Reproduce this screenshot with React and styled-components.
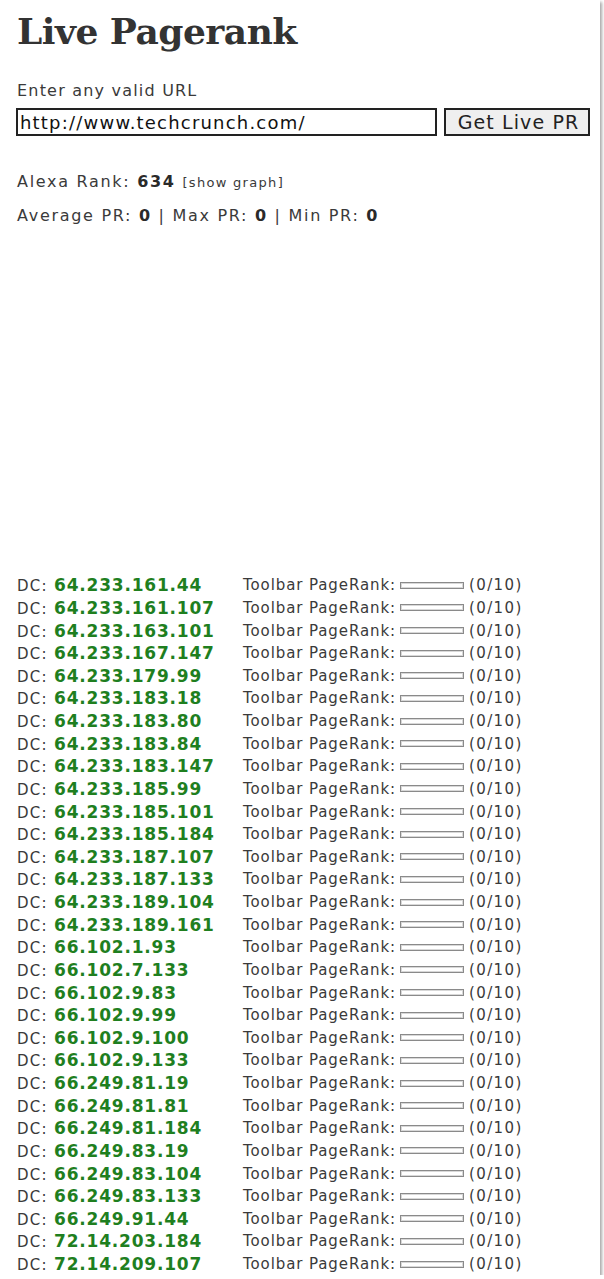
import React from 'react'
import styled, { createGlobalStyle } from 'styled-components'

const GlobalStyle = createGlobalStyle`
    body {
        margin: 0;
        background: #ffffff;
        font-family: "DejaVu Sans", Verdana, sans-serif;
        color: #3a3a3a;
    }
`

const Card = styled.div`
    width: 600px;
    height: 1275px;
    box-sizing: border-box;
    padding: 0 0 0 17px;
    background: #fff;
    box-shadow: 2px 2px 3px rgba(0, 0, 0, 0.35);
    overflow: hidden;
`

const Title = styled.h1`
    font-family: "DejaVu Serif", Georgia, serif;
    font-weight: bold;
    font-size: 36px;
    letter-spacing: -0.5px;
    color: #333;
    margin: 0;
    padding-top: 7px;
    line-height: 48px;
`

const Label = styled.div`
    font-size: 16px;
    letter-spacing: 1.2px;
    margin-top: 26px;
    line-height: 20px;
`

const Form = styled.form`
    display: flex;
    gap: 7px;
    margin: 7px 0 0 -1px;
`

const UrlInput = styled.input`
    width: 421px;
    height: 28px;
    box-sizing: border-box;
    border: 2px solid #222;
    padding: 0 2px;
    font-family: "DejaVu Sans", Verdana, sans-serif;
    font-size: 18px;
    letter-spacing: 1.2px;
    color: #111;
    outline: none;
`

const Button = styled.button`
    width: 146px;
    height: 28px;
    box-sizing: border-box;
    border: 2px solid #222;
    background: #efefef;
    font-family: "DejaVu Sans", Verdana, sans-serif;
    font-size: 19px;
    letter-spacing: 1.1px;
    color: #222;
    padding: 0 0 0 3px;
`

const StatLine = styled.div`
    font-size: 16px;
    letter-spacing: 1.7px;
    line-height: 20px;
    margin-top: ${p => p.$top}px;
`

const Strong = styled.b`
    color: #2a2a2a;
`

const Small = styled.span`
    font-size: 13px;
    letter-spacing: 1.3px;
`

const GraphArea = styled.div`
    height: 348px;
`

const List = styled.div`
    display: flex;
    flex-direction: column;
`

const Row = styled.div`
    display: grid;
    grid-template-columns: 226px auto;
    align-items: center;
    height: 22.63px;
`

const Dc = styled.div`
    font-size: 15px;
    letter-spacing: 1.3px;
    white-space: nowrap;
`

const Ip = styled.span`
    font-size: 17px;
    font-weight: bold;
    color: #1f7f1f;
    letter-spacing: 0.8px;
`

const Toolbar = styled.div`
    display: flex;
    align-items: center;
    font-size: 15px;
    letter-spacing: 0.9px;
    white-space: nowrap;
`

const Bar = styled.span`
    display: inline-block;
    width: 64px;
    height: 7px;
    box-sizing: border-box;
    border: 1px solid #8a8a8a;
    box-shadow: inset 0 0 0 1px #d8d8d8;
    margin: 0 5px 0 4px;
`

const Score = styled.span`
    letter-spacing: 1.4px;
`

const ips = [
    '64.233.161.44', '64.233.161.107', '64.233.163.101', '64.233.167.147',
    '64.233.179.99', '64.233.183.18', '64.233.183.80', '64.233.183.84',
    '64.233.183.147', '64.233.185.99', '64.233.185.101', '64.233.185.184',
    '64.233.187.107', '64.233.187.133', '64.233.189.104', '64.233.189.161',
    '66.102.1.93', '66.102.7.133', '66.102.9.83', '66.102.9.99',
    '66.102.9.100', '66.102.9.133', '66.249.81.19', '66.249.81.81',
    '66.249.81.184', '66.249.83.19', '66.249.83.104', '66.249.83.133',
    '66.249.91.44', '72.14.203.184', '72.14.209.107',
]

export default function App() {
    return (
        <>
            <GlobalStyle />
            <Card>
                <Title>Live Pagerank</Title>
                <Label>Enter any valid URL</Label>
                <Form onSubmit={e => e.preventDefault()}>
                    <UrlInput defaultValue="http://www.techcrunch.com/" />
                    <Button type="submit">Get Live PR</Button>
                </Form>
                <StatLine $top={36}>
                    Alexa Rank: <Strong>634</Strong> <Small>[show graph]</Small>
                </StatLine>
                <StatLine $top={13}>
                    Average PR: <Strong>0</Strong> | Max PR: <Strong>0</Strong> | Min PR: <Strong>0</Strong>
                </StatLine>
                <GraphArea />
                <List>
                    {ips.map(ip => (
                        <Row key={ip}>
                            <Dc>DC: <Ip>{ip}</Ip></Dc>
                            <Toolbar>
                                Toolbar PageRank:<Bar /><Score>(0/10)</Score>
                            </Toolbar>
                        </Row>
                    ))}
                </List>
            </Card>
        </>
    )
}
